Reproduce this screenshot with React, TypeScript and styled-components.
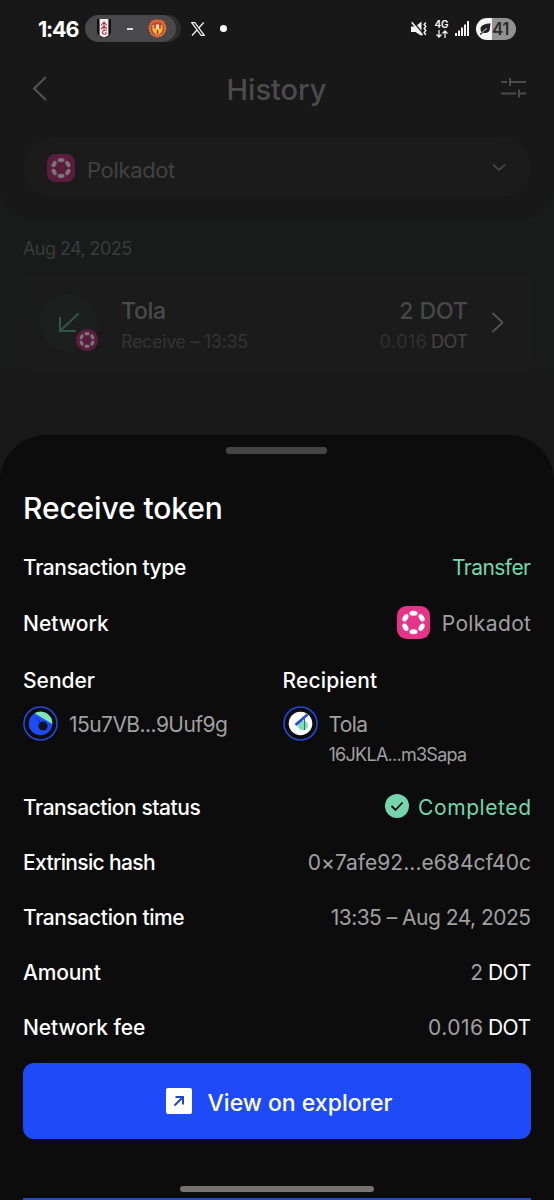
import React from "react";
import styled, { createGlobalStyle } from "styled-components";

const GlobalStyle = createGlobalStyle`
  * { box-sizing: border-box; }
  body { margin: 0; background: #181818; }
`;

const Screen = styled.main`
  position: relative;
  width: 554px;
  height: 1200px;
  overflow: hidden;
  background: linear-gradient(#191b1a 0, #191b1a 310px, #191919 400px);
  font-family: Inter, "Noto Sans", sans-serif;
  color: #fff;
`;

const Text = styled.span<{ $size?: number; $weight?: number; $color?: string; $track?: number }>`
  display: block;
  white-space: pre;
  font-size: ${(p) => p.$size ?? 21}px;
  font-weight: ${(p) => p.$weight ?? 400};
  color: ${(p) => p.$color ?? "#fff"};
  letter-spacing: ${(p) => p.$track ?? 0}px;
  margin-right: ${(p) => -(p.$track ?? 0)}px;
  line-height: 30px;
`;

const TopPanel = styled.section`
  height: 218px;
  background: #181818;
  border-radius: 0 0 30px 30px;
`;

const StatusBar = styled.div`
  display: flex;
  align-items: center;
  height: 57px;
  padding: 0 38px;
`;

const Scores = styled.div`
  display: flex;
  align-items: center;
  justify-content: space-between;
  width: 91px;
  height: 27px;
  margin-left: 6px;
  padding: 0 9px 0 12px;
  border-radius: 14px;
  background: #49494b;
  box-shadow: 5px 0 0 #2c2c2d;
`;

const Dash = styled.i`
  width: 6px;
  height: 2px;
  background: #ddd;
`;

const Dot = styled.i`
  width: 7px;
  height: 7px;
  margin-left: 15px;
  border-radius: 50%;
  background: #fff;
`;

const StatusIcons = styled.div`
  display: flex;
  align-items: center;
  margin-left: auto;
`;

const Battery = styled.div`
  display: flex;
  align-items: center;
  gap: 1px;
  width: 40px;
  height: 22px;
  margin-left: 7px;
  padding-left: 4px;
  border-radius: 11px;
  background: linear-gradient(90deg, #f4f4f4 16px, #929292 16px);
`;

const Header = styled.header`
  display: flex;
  align-items: center;
  justify-content: space-between;
  height: 63px;
  padding: 0 27px 0 32px;
`;

const HeaderTitle = styled.div`
  padding: 2px 0 0 5px;
`;

const Picker = styled.div`
  display: flex;
  align-items: center;
  height: 59px;
  margin: 18px 23px 0;
  padding: 0 25px 0 24px;
  border-radius: 30px;
  background: #1b1b1b;
`;

const PickerLabel = styled.div`
  flex: 1;
  padding: 4px 0 0 12px;
`;

const DateLine = styled.div`
  height: 46px;
  padding: 16px 23px 0;
`;

const HistoryCard = styled.article`
  display: flex;
  align-items: center;
  height: 97px;
  margin: 10px 23px 0;
  padding: 0 27px 0 17px;
  border-radius: 12px;
  background: #1b1b1b;
`;

const Direction = styled.div`
  position: relative;
  display: flex;
  align-items: center;
  justify-content: center;
  width: 58px;
  height: 58px;
  border-radius: 50%;
  background: #1b201e;
`;

const NetworkBadge = styled.div`
  position: absolute;
  right: 0;
  bottom: 1px;
  height: 22px;
`;

const Lines = styled.div<{ $end?: boolean }>`
  display: flex;
  flex-direction: column;
  gap: 1px;
  padding-top: 7px;
  align-items: ${(p) => (p.$end ? "flex-end" : "flex-start")};
  margin-left: ${(p) => (p.$end ? "auto" : "23px")};
  margin-right: ${(p) => (p.$end ? "23px" : "0")};
`;

const Inline = styled.div<{ $gap?: number }>`
  display: flex;
  align-items: center;
  gap: ${(p) => p.$gap ?? 5}px;
`;

const RaisedIcon = styled.div`
  display: flex;
  padding-bottom: 3px;
`;

const Sheet = styled.section`
  position: absolute;
  inset: 435px 0 0;
  display: flex;
  flex-direction: column;
  padding: 12px 23px 0;
  border-radius: 46px 46px 0 0;
  background: #0c0c0c;
`;

const Handle = styled.div`
  width: 101px;
  height: 7px;
  margin: 0 204px 0 203px;
  border-radius: 3px;
  background: #444;
`;

const Title = styled.h1`
  margin: 39px 0 0;
  height: 47px;
  font: inherit;
`;

const Row = styled.div<{ $h?: number }>`
  display: flex;
  align-items: center;
  justify-content: space-between;
  height: ${(p) => p.$h ?? 55}px;
`;

const Parties = styled.div`
  display: grid;
  grid-template-columns: 259.5px 1fr;
  height: 129px;
  padding-top: 14px;
`;

const Account = styled.div`
  display: flex;
  gap: 11px;
  margin-top: 10px;
`;

const AccountText = styled.div`
  padding-top: 4px;
`;

const ExplorerButton = styled.button`
  display: flex;
  align-items: center;
  justify-content: center;
  gap: 16px;
  height: 76px;
  margin-top: 8px;
  padding: 0 0 0 4px;
  border: 0;
  border-radius: 11px;
  background: #1e4bf7;
  font-family: inherit;
`;

const ButtonLabel = styled.span`
  padding-top: 4px;
`;

const HomeBar = styled.div`
  width: 194px;
  height: 6px;
  margin: 47px auto 0;
  border-radius: 3px;
  background: #777172;
`;

const NextButtonEdge = styled.div`
  height: 2px;
  margin-top: 6px;
  background: #294bc4;
`;

const NetworkType = styled.div`
  display: flex;
  flex-direction: column;
  align-items: center;
  gap: 1px;
  width: 13px;
  margin-left: 8px;
  span { line-height: 9px; }
`;

function Polkadot({ size, bg = "#e6348a", fg = "#fff", round = 10 }: { size: number; bg?: string; fg?: string; round?: number }) {
  return (
    <svg width={size} height={size} viewBox="0 0 34 34">
      <rect width="34" height="34" rx={round} fill={bg} />
      {[0, 60, 120, 180, 240, 300].map((a) => (
        <ellipse key={a} cx="17" cy="7.4" rx="4.2" ry="2.6" fill={fg} transform={`rotate(${a} 17 17)`} />
      ))}
    </svg>
  );
}

function FulhamCrest() {
  return (
    <svg width="14" height="19" viewBox="0 0 14 19">
      <path d="M0 0h14v13q-1 5-7 6-6-1-7-6z" fill="#111" />
      <path d="M2.600 0h8.800v16.500L7 18.500l-4.400-2z" fill="#f1eeee" />
      <path d="M4 6.500 7 3l3 3.500M4 10l3-3 3 3M9.500 11.500q-4-1-4 1.800T9 15v-2M7 3.500v7" fill="none" stroke="#b5343f" strokeWidth="1.100" />
    </svg>
  );
}

function UnitedCrest() {
  return (
    <svg width="19" height="19" viewBox="0 0 19 19">
      <path d="M3 1.500Q9.500-1 16 1.500L18.500 8q0 8-9 11-9-3-9-11z" fill="#c8482f" />
      <circle cx="9.500" cy="9.500" r="7.800" fill="none" stroke="#dc9a45" strokeWidth="1.400" strokeDasharray="1.600 1" />
      <path d="M4.500 6h10v5q-1.500 4-5 5-3.500-1-5-5z" fill="#efc03d" />
      <path d="M7 6v3.500M12 6v3.500M9.500 11v4" stroke="#b8242b" strokeWidth="1.500" />
      <path d="M8 5.500h3v4H8z" fill="#f3e4b0" />
    </svg>
  );
}

function XLogo() {
  return (
    <svg width="14" height="14" viewBox="0 0 14 14" fill="none" stroke="#eee">
      <path d="M.8.700h3.100l9.300 12.600h-3.100z" strokeWidth="1.200" />
      <path d="M12.700.500 8 5.800M6 8 1 13.500" strokeWidth="1.300" />
    </svg>
  );
}

const XSlot = styled.div`
  display: flex;
  margin-left: 15px;
`;

function Mute() {
  return (
    <svg width="16" height="16" viewBox="0 0 16 16">
      <path d="M0 5.500h4.500L10.500.500v14.500L4.500 11H0z" fill="#f2f2f2" />
      <path d="M1.500.300 12.500 13" stroke="#181818" strokeWidth="1.600" />
      <path d="M.700 1.200 11.500 14" stroke="#f2f2f2" strokeWidth="1.600" />
      <path d="m14.800 1.500-1.600 2 1.600 2-1.600 2 1.600 2-1.600 2 1.600 2.500" fill="none" stroke="#eee" strokeWidth="1.500" />
    </svg>
  );
}

const SignalSlot = styled.div`
  display: flex;
  margin-left: 7px;
`;

function Signal() {
  return (
    <svg width="14" height="15" viewBox="0 0 14 15" fill="#f2f2f2">
      <rect x="0" y="12" width="2" height="3" />
      <rect x="3" y="9.500" width="2" height="5.500" />
      <rect x="6" y="6.500" width="2" height="8.500" />
      <rect x="9" y="3.500" width="2" height="11.500" />
      <rect x="12" y="0" width="2" height="15" />
    </svg>
  );
}

const labelProps = { $weight: 500, $size: 21 };
const muted = "#a0a0a0";
const green = "#77d5ad";

export default function App() {
  return (
    <>
      <GlobalStyle />
      <Screen>
        <TopPanel>
          <StatusBar>
            <Text $size={21.5} $weight={700} $track={-1.2}>1:46</Text>
            <Scores>
              <FulhamCrest />
              <Dash />
              <UnitedCrest />
            </Scores>
            <XSlot><XLogo /></XSlot>
            <Dot />
            <StatusIcons>
              <Mute />
              <NetworkType>
                <Text $size={10} $weight={600} $track={-0.2}>4G</Text>
                <svg width="12" height="8" viewBox="0 0 12 8" fill="none" stroke="#eee" strokeWidth="1.300">
                  <path d="M3 0v7M.5 4.500 3 7l2.500-2.500M9 8V1M6.500 3.500 9 1l2.500 2.500" />
                </svg>
              </NetworkType>
              <SignalSlot><Signal /></SignalSlot>
              <Battery>
                <svg width="11" height="12" viewBox="0 0 11 12">
                  <path d="M10.800.500C5 .500 1 2 .500 5.500c0 2 .500 3 1.300 4 2 .800 5 .500 6.500-.500 2.500-1.800 1-5 2.500-8.500z" fill="#222" />
                  <path d="M1.500 10.500Q3.500 7 7 5.500" fill="none" stroke="#f4f4f4" strokeWidth=".8" />
                  <path d="M0 11.500 2.500 9.500" stroke="#222" strokeWidth="1.200" />
                </svg>
                <Text $size={17} $weight={600} $color="#2c2c2c" $track={-0.6}>41</Text>
              </Battery>
            </StatusIcons>
          </StatusBar>
          <Header>
            <svg width="16" height="26" viewBox="0 0 16 26" fill="none" stroke="#555" strokeWidth="2">
              <path d="M14 1 2 12.500l12 11.500" />
            </svg>
            <HeaderTitle>
              <Text $size={29} $weight={500} $color="#4b4b4b">History</Text>
            </HeaderTitle>
            <svg width="27" height="22" viewBox="0 0 27 22" fill="none" stroke="#4b4b4b" strokeWidth="2">
              <path d="M1 4h6M10 0v8M10 4h16M1 15.500h15M19 11.500v8M19 15.500h7" />
            </svg>
          </Header>
          <Picker>
            <Polkadot size={28} bg="#5b1c3d" fg="#777" />
            <PickerLabel>
              <Text $size={22} $color="#414141" $track={-0.35}>Polkadot</Text>
            </PickerLabel>
            <svg width="14" height="9" viewBox="0 0 14 9" fill="none" stroke="#444" strokeWidth="1.800">
              <path d="m1 1.500 6 5.500 6-5.500" />
            </svg>
          </Picker>
        </TopPanel>
        <DateLine>
          <Text $size={18} $color="#3a3c3b" $track={-0.57}>Aug 24, 2025</Text>
        </DateLine>
        <HistoryCard>
          <Direction>
            <svg width="22" height="22" viewBox="0 0 22 22" fill="none" stroke="#2f5849" strokeWidth="2">
              <path d="M20.500 1.500 2 19M2 5v14h16" />
            </svg>
            <NetworkBadge>
              <Polkadot size={22} bg="#5b1c3d" fg="#777" round={17} />
            </NetworkBadge>
          </Direction>
          <Lines>
            <Text $size={23} $weight={500} $color="#4b4b4b" $track={-0.3}>Tola</Text>
            <Text $size={18} $color="#343434" $track={-0.35}>Receive – 13:35</Text>
          </Lines>
          <Lines $end>
            <Text $size={23} $weight={500} $color="#484848">2 DOT</Text>
            <Inline $gap={4}>
              <Text $size={18} $color="#303030" $track={0.5}>0.016</Text>
              <Text $size={18} $color="#444" $track={-0.4}>DOT</Text>
            </Inline>
          </Lines>
          <svg width="13" height="22" viewBox="0 0 13 22" fill="none" stroke="#555" strokeWidth="1.800">
            <path d="m1.500 1 10 9.500-10 9.500" />
          </svg>
        </HistoryCard>

        <Sheet>
          <Handle />
          <Title>
            <Text $size={30} $weight={500} $track={-0.12}>Receive token</Text>
          </Title>
          <Row $h={56}>
            <Text {...labelProps} $track={-0.37}>Transaction type</Text>
            <Text $color={green} $track={-0.55}>Transfer</Text>
          </Row>
          <Row $h={56}>
            <Text {...labelProps}>Network</Text>
            <Inline $gap={12}>
              <RaisedIcon>
                <Polkadot size={33} />
              </RaisedIcon>
              <Text $color={muted} $track={0.38}>Polkadot</Text>
            </Inline>
          </Row>
          <Parties>
            <div>
              <Text {...labelProps}>Sender</Text>
              <Account>
                <svg width="35" height="35" viewBox="0 0 35 35">
                  <circle cx="17.500" cy="17.500" r="16.500" fill="none" stroke="#2348db" strokeWidth="1.600" />
                  <circle cx="17.500" cy="17.500" r="11.800" fill="#1e4bf7" />
                  <path d="M11.500 7.300A11.800 11.800 0 0 1 29.300 18z" fill="#80e5b2" />
                  <circle cx="20" cy="20" r="4.600" fill="#101321" />
                  <path d="m13 11 4 5" stroke="#19318e" />
                </svg>
                <AccountText>
                  <Text $color={muted} $track={-0.55}>15u7VB...9Uuf9g</Text>
                </AccountText>
              </Account>
            </div>
            <div>
              <Text {...labelProps} $track={0.15}>Recipient</Text>
              <Account>
                <svg width="35" height="35" viewBox="0 0 35 35">
                  <circle cx="17.500" cy="17.500" r="16.500" fill="none" stroke="#2348db" strokeWidth="1.600" />
                  <circle cx="17.500" cy="17.500" r="11.800" fill="#fff" />
                  <circle cx="20" cy="19.500" r="5" fill="#82dfb4" />
                  <path d="M21.500 13v11" stroke="#387767" />
                  <path d="M12.500 19 24.500 8.500" stroke="#2348db" strokeWidth="2.600" />
                </svg>
                <AccountText>
                  <Text $color={muted} $track={-0.6}>Tola</Text>
                  <Text $color={muted} $size={18} $track={-0.73}>16JKLA...m3Sapa</Text>
                </AccountText>
              </Account>
            </div>
          </Parties>
          <Row>
            <Text {...labelProps} $track={-0.45}>Transaction status</Text>
            <Inline $gap={9}>
              <RaisedIcon>
                <svg width="24" height="24" viewBox="0 0 24 24">
                  <circle cx="12" cy="12" r="12" fill={green} />
                  <path d="m6.500 12 4 4L17.500 8.500" fill="none" stroke="#0c0c0c" strokeWidth="1.800" />
                </svg>
              </RaisedIcon>
              <Text $color={green} $track={0.58}>Completed</Text>
            </Inline>
          </Row>
          <Row>
            <Text {...labelProps} $track={-0.65}>Extrinsic hash</Text>
            <Text $color={muted} $track={0.05}>0×7afe92...e684cf40c</Text>
          </Row>
          <Row>
            <Text {...labelProps} $track={-0.37}>Transaction time</Text>
            <Text $color={muted} $track={-0.52}>13:35 – Aug 24, 2025</Text>
          </Row>
          <Row>
            <Text {...labelProps} $track={-0.15}>Amount</Text>
            <Inline>
              <Text $color={muted}>2</Text>
              <Text $track={-0.6}>DOT</Text>
            </Inline>
          </Row>
          <Row>
            <Text {...labelProps} $track={-0.1}>Network fee</Text>
            <Inline>
              <Text $color={muted} $track={0.5}>0.016</Text>
              <Text $track={-0.6}>DOT</Text>
            </Inline>
          </Row>
          <ExplorerButton>
            <svg width="26" height="26" viewBox="0 0 26 26">
              <rect width="26" height="26" rx="2" fill="#fff" />
              <path d="m8.500 17.500 8-8M9.500 9h7.500v7.500" fill="none" stroke="#2348c8" strokeWidth="2" />
            </svg>
            <ButtonLabel>
              <Text $size={23} $weight={500}>View on explorer</Text>
            </ButtonLabel>
          </ExplorerButton>
          <HomeBar />
          <NextButtonEdge />
        </Sheet>
      </Screen>
    </>
  );
}
